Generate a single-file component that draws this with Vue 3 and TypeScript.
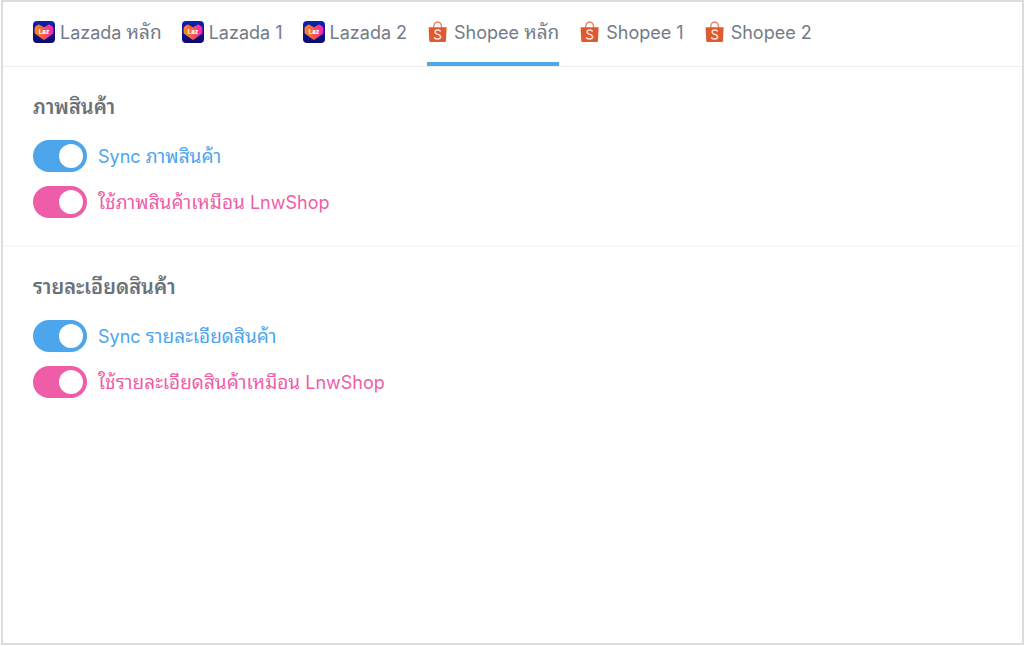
<script setup lang="ts">
import { ref } from 'vue'

interface Piece {
  text: string
  thai: boolean
}

interface Tab {
  id: string
  label: string
  market: 'lazada' | 'shopee'
}

interface Option {
  id: string
  label: string
  tone: 'blue' | 'pink'
  on: boolean
}

interface Section {
  id: string
  title: string
  options: Option[]
}

const tabs: Tab[] = [
  { id: 'lazada-main', label: 'Lazada หลัก', market: 'lazada' },
  { id: 'lazada-1', label: 'Lazada 1', market: 'lazada' },
  { id: 'lazada-2', label: 'Lazada 2', market: 'lazada' },
  { id: 'shopee-main', label: 'Shopee หลัก', market: 'shopee' },
  { id: 'shopee-1', label: 'Shopee 1', market: 'shopee' },
  { id: 'shopee-2', label: 'Shopee 2', market: 'shopee' },
]

const active = ref('shopee-main')

const sections = ref<Section[]>([
  {
    id: 'images',
    title: 'ภาพสินค้า',
    options: [
      { id: 'sync-images', label: 'Sync ภาพสินค้า', tone: 'blue', on: true },
      { id: 'same-images', label: 'ใช้ภาพสินค้าเหมือน LnwShop', tone: 'pink', on: true },
    ],
  },
  {
    id: 'details',
    title: 'รายละเอียดสินค้า',
    options: [
      { id: 'sync-details', label: 'Sync รายละเอียดสินค้า', tone: 'blue', on: true },
      { id: 'same-details', label: 'ใช้รายละเอียดสินค้าเหมือน LnwShop', tone: 'pink', on: true },
    ],
  },
])

// Splits a label into Thai and Latin runs, so each script gets its own size.
function pieces(label: string): Piece[] {
  return (label.match(/[\u0e00-\u0e7f]+|[^\u0e00-\u0e7f]+/g) ?? []).map((text) => ({
    text,
    thai: /[\u0e00-\u0e7f]/.test(text),
  }))
}
</script>

<template>
  <main class="panel">
    <nav class="tabs" role="tablist">
      <button
        v-for="tab in tabs"
        :key="tab.id"
        type="button"
        role="tab"
        class="tab"
        :class="{ active: tab.id === active }"
        :aria-selected="tab.id === active"
        @click="active = tab.id"
      >
        <svg v-if="tab.market === 'lazada'" class="icon" viewBox="0 0 22 22" aria-hidden="true">
          <defs>
            <linearGradient :id="`bg-${tab.id}`" x1="0" y1="0" x2="0" y2="1">
              <stop offset="0" stop-color="#0a22b4" />
              <stop offset="1" stop-color="#10086e" />
            </linearGradient>
            <linearGradient :id="`heart-${tab.id}`" x1="0" y1="0" x2="1" y2="0">
              <stop offset="0" stop-color="#fb8a1c" />
              <stop offset="0.45" stop-color="#f4603f" />
              <stop offset="1" stop-color="#f21fc4" />
            </linearGradient>
          </defs>
          <rect width="22" height="22" rx="4" :fill="`url(#bg-${tab.id})`" />
          <path
            d="M6.500 3.800 11 6.200l4.500-2.400c.5-.3 1-.3 1.500 0l2.500 1.600c.6.4.9.9.9 1.600v4.500c0 .7-.3 1.200-.9 1.600l-7.600 5.300c-.6.4-1.200.4-1.800 0l-7.600-5.300c-.6-.4-.9-.9-.9-1.600V7c0-.7.3-1.200.9-1.600l2.500-1.600c.5-.3 1-.3 1.500 0z"
            :fill="`url(#heart-${tab.id})`"
          />
          <text class="laz" x="11" y="13" text-anchor="middle">Laz</text>
        </svg>
        <svg v-else class="icon" viewBox="0 0 22 22" aria-hidden="true">
          <path d="M6.600 7C6.600 3 8.300 1 10.600 1s4 2 4 6" fill="none" stroke="#e8835f" stroke-width="1.300" />
          <path d="M1.600 6.200h18l-.6 13.200c-.1 1-.8 1.600-1.800 1.600H4c-1 0-1.700-.6-1.800-1.600z" fill="#de5a2f" />
          <path
            d="M13.200 9.900c-.7-.7-1.500-1-2.500-1-1.500 0-2.600.8-2.600 2.100 0 3 5.500 1.700 5.500 4.800 0 1.400-1.200 2.300-2.900 2.300-1.200 0-2.300-.4-3.200-1.200"
            fill="none"
            stroke="#fbe4dc"
            stroke-width="1.500"
            stroke-linecap="round"
          />
        </svg>
        <span class="label">
          <span v-for="(piece, i) in pieces(tab.label)" :key="i" :class="{ thai: piece.thai }">{{ piece.text }}</span>
        </span>
      </button>
    </nav>

    <section v-for="section in sections" :key="section.id" class="section">
      <h2 class="title">{{ section.title }}</h2>
      <label
        v-for="option in section.options"
        :key="option.id"
        class="option"
        :class="option.tone"
        :for="option.id"
      >
        <input :id="option.id" v-model="option.on" type="checkbox" role="switch" class="switch" />
        <span class="label">
          <span v-for="(piece, i) in pieces(option.label)" :key="i" :class="{ thai: piece.thai }">{{ piece.text }}</span>
        </span>
      </label>
    </section>
  </main>
</template>

<style>
body {
  background: #fff;
}
</style>

<style scoped>
.panel {
  box-sizing: border-box;
  min-height: calc(100vh - 1px);
  margin: 0 0 1px 1px;
  border: 2px solid #dcdcdc;
  font-family: Inter, "Noto Sans Thai Looped", "Noto Looped Thai", Loma, Sarabun, Waree, Garuda, "Droid Sans Thai", FreeSans, sans-serif;
  font-size: 18px;
  line-height: 30px;
  color: #737b88;
}

.tabs {
  display: flex;
  gap: 20px;
  padding: 0 30px;
  border-bottom: 1px solid #ececee;
}

.tab {
  display: flex;
  align-items: center;
  gap: 5px;
  height: 64px;
  padding: 2px 0;
  border: 0;
  border-bottom: 4px solid transparent;
  background: none;
  color: inherit;
  font: inherit;
  white-space: nowrap;
  cursor: pointer;
}

.tab.active {
  border-bottom-color: #4fa9e9;
}

.label {
  padding-top: 2px;
  white-space: pre;
}

.thai {
  font-size: 19px;
  line-height: 24px;
}

.icon {
  flex: none;
  width: 22px;
  height: 22px;
}

.laz {
  fill: #fff;
  font-family: Inter, sans-serif;
  font-size: 6px;
  font-weight: 800;
}

.section {
  display: flex;
  flex-direction: column;
  align-items: flex-start;
  gap: 14px;
  padding: 25px 30px 27px;
}

.section + .section {
  border-top: 2px solid #f7f7f8;
}

.title {
  margin: 0 0 4px;
  font-size: 20px;
  font-weight: 600;
  color: #6b7178;
}

.option {
  display: flex;
  align-items: center;
  gap: 11px;
  cursor: pointer;
}

.blue {
  color: #4da5ec;
}

.pink {
  color: #ef5da8;
}

.switch {
  appearance: none;
  flex: none;
  display: flex;
  align-items: center;
  box-sizing: border-box;
  width: 54px;
  height: 32px;
  margin: 0;
  padding: 0 4px;
  border-radius: 16px;
  background: #c9ced6;
  color: inherit;
  cursor: pointer;
}

.switch::before {
  content: "";
  width: 24px;
  height: 24px;
  border-radius: 50%;
  background: #fff;
}

.switch:checked {
  justify-content: flex-end;
  background: currentColor;
}
</style>
